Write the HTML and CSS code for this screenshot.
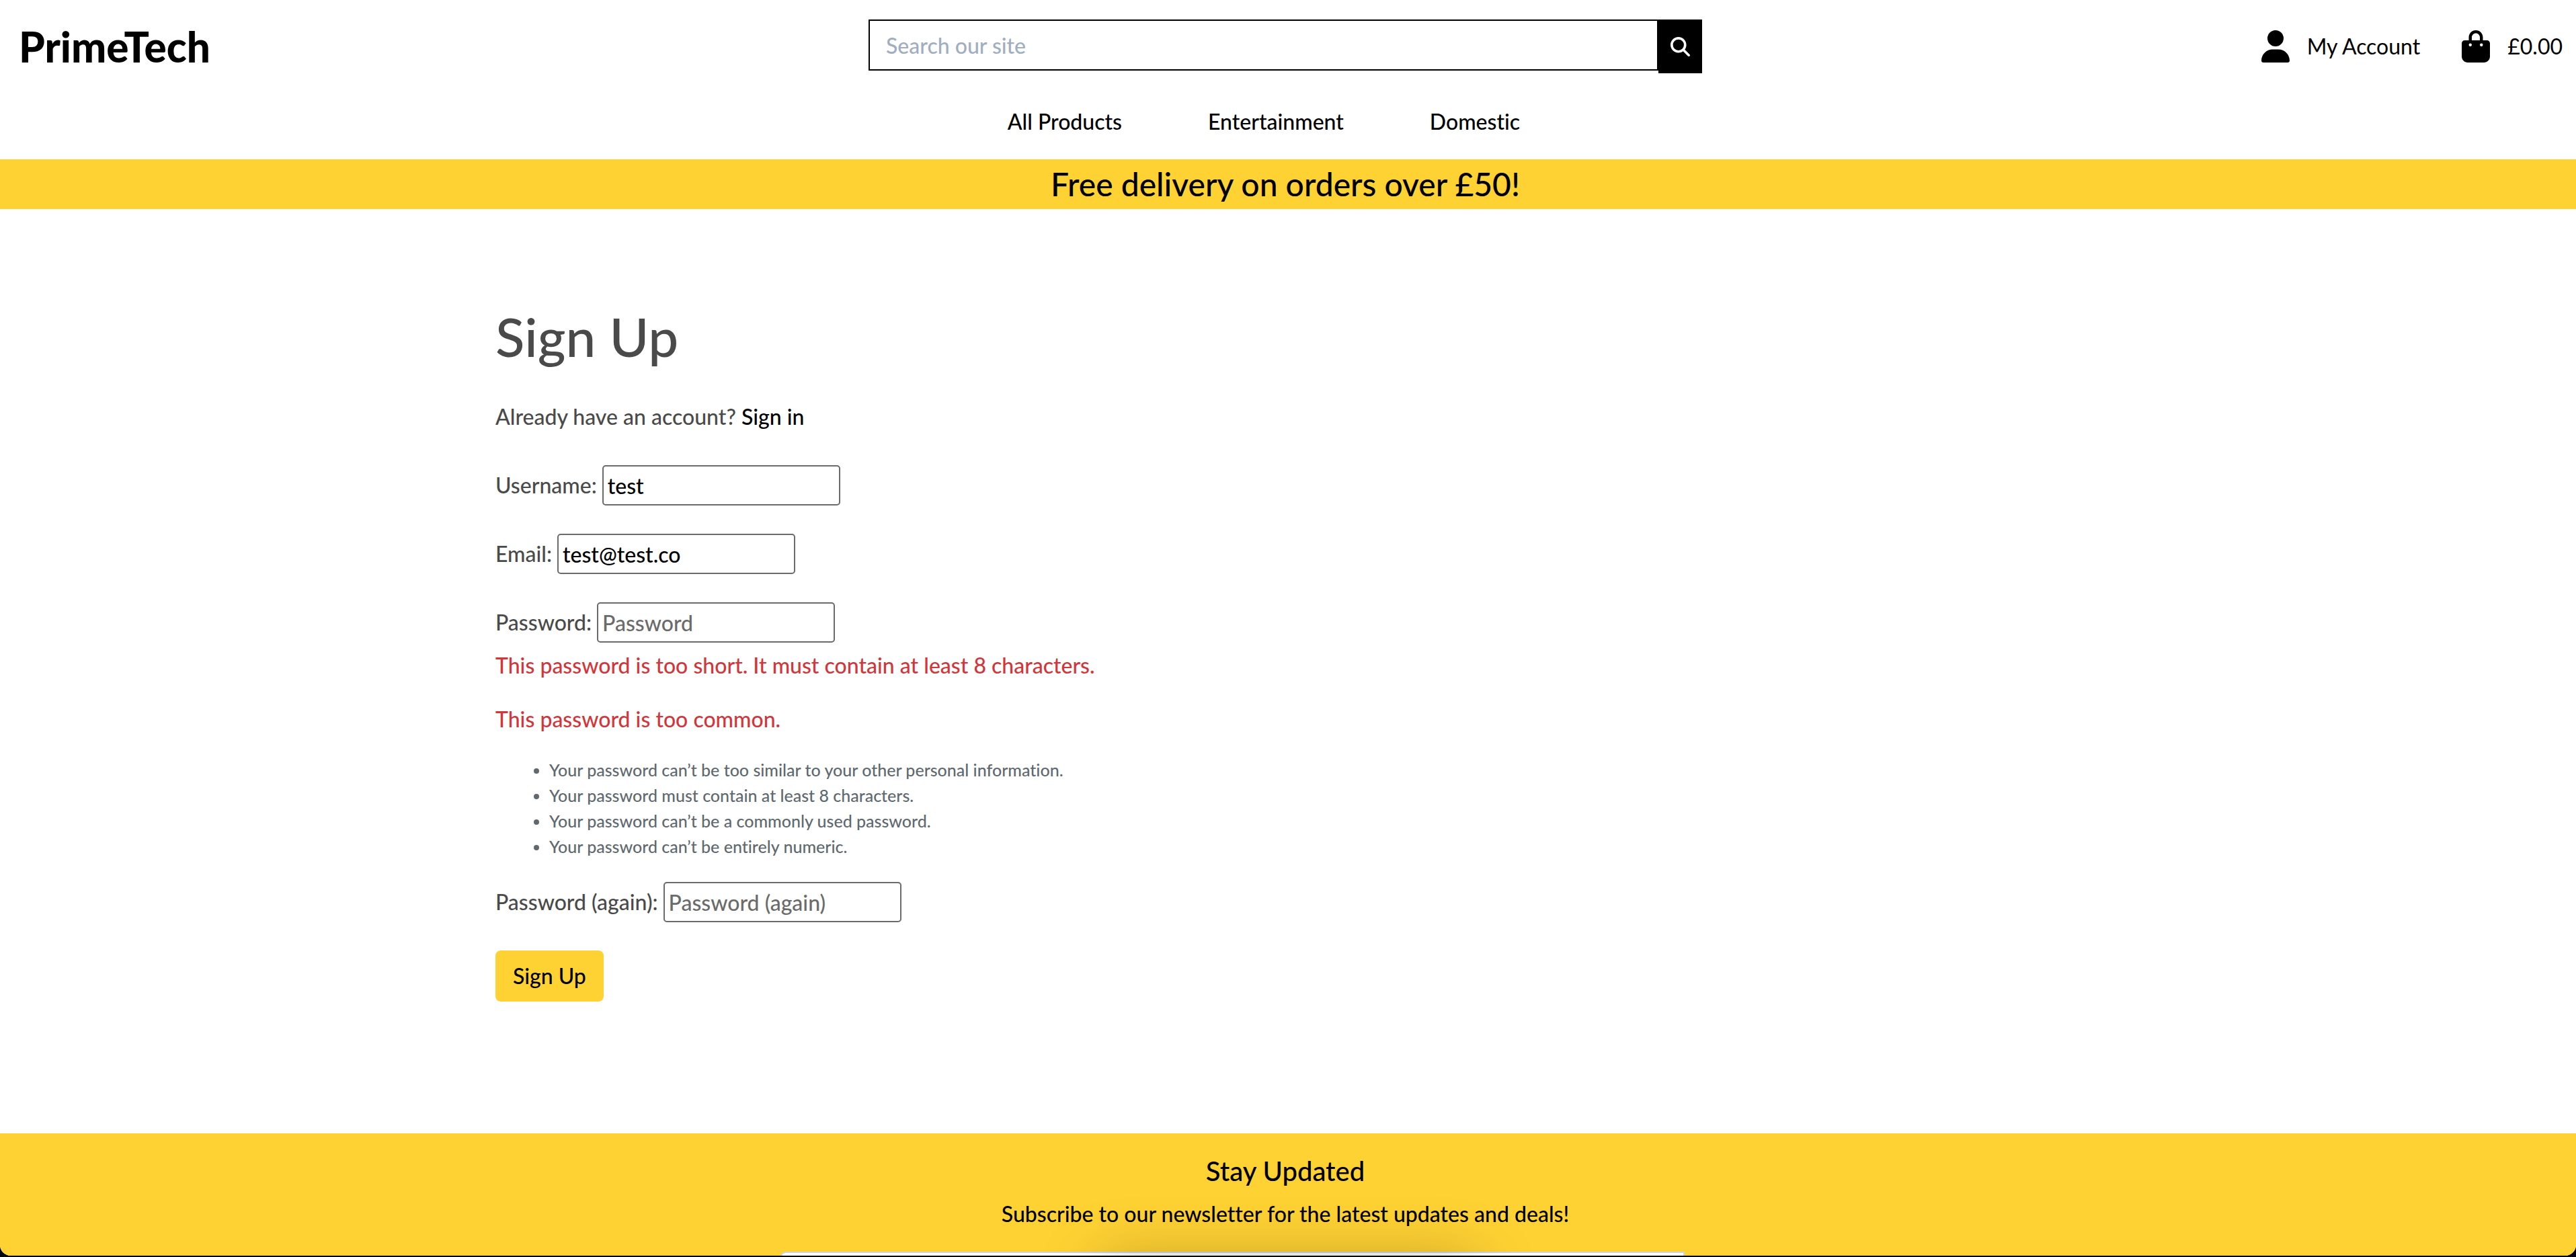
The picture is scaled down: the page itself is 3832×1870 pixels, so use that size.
FILE: index.html
```html
<!DOCTYPE html>
<html lang="en">
<head>
  <meta charset="utf-8">
  <meta name="viewport" content="width=device-width, initial-scale=1">
  <title>PrimeTech - Sign Up</title>
  <link rel="stylesheet" href="styles.css">
</head>
<body>
  <div class="page">
    <header class="header">
      <div class="header-row">
        <a class="logo" href="#">PrimeTech</a>
        <form class="search" role="search">
          <input class="search-input" type="search" placeholder="Search our site" aria-label="Search our site">
          <button class="search-button" type="submit" aria-label="Search">
            <svg class="search-icon" viewBox="0 0 512 512" aria-hidden="true"><path d="M416 208c0 45.900-14.900 88.300-40 122.700L502.600 457.400c12.500 12.500 12.500 32.800 0 45.300s-32.800 12.500-45.300 0L330.700 376c-34.400 25.200-76.800 40-122.700 40C93.100 416 0 322.900 0 208S93.100 0 208 0S416 93.100 416 208zM208 352a144 144 0 1 0 0-288 144 144 0 1 0 0 288z"/></svg>
          </button>
        </form>
        <div class="account">
          <a class="account-link" href="#">
            <svg class="account-icon" viewBox="0 0 448 512" aria-hidden="true"><path d="M224 256A128 128 0 1 0 224 0a128 128 0 1 0 0 256zm-45.700 48C79.800 304 0 383.800 0 482.300C0 498.700 13.300 512 29.700 512H418.300c16.400 0 29.700-13.300 29.700-29.700C448 383.800 368.200 304 269.700 304H178.300z"/></svg>
            <span>My Account</span>
          </a>
          <a class="account-link" href="#">
            <svg class="account-icon" viewBox="0 0 448 512" aria-hidden="true"><path d="M160 112c0-35.300 28.700-64 64-64s64 28.700 64 64v48H160V112zm-48 48H48c-26.500 0-48 21.500-48 48V416c0 53 43 96 96 96H352c53 0 96-43 96-96V208c0-26.500-21.500-48-48-48H336V112C336 50.100 285.900 0 224 0S112 50.100 112 112v48zm24 48a24 24 0 1 1 0 48 24 24 0 1 1 0-48zm152 24a24 24 0 1 1 48 0 24 24 0 1 1 -48 0z"/></svg>
            <span>£0.00</span>
          </a>
        </div>
      </div>
      <nav class="nav">
        <a href="#">All Products</a>
        <a href="#">Entertainment</a>
        <a href="#">Domestic</a>
      </nav>
    </header>

    <div class="banner">Free delivery on orders over £50!</div>

    <main class="main">
      <h1 class="title">Sign Up</h1>
      <p class="intro">Already have an account? <a href="#">Sign in</a></p>
      <form class="signup">
        <div class="field">
          <label for="username">Username:</label>
          <input id="username" type="text" value="test">
        </div>
        <div class="field">
          <label for="email">Email:</label>
          <input id="email" type="email" value="test@test.co">
        </div>
        <div class="field field-invalid">
          <label for="password1">Password:</label>
          <input id="password1" type="password" placeholder="Password">
        </div>
        <p class="error">This password is too short. It must contain at least 8 characters.</p>
        <p class="error">This password is too common.</p>
        <ul class="hints">
          <li>Your password can’t be too similar to your other personal information.</li>
          <li>Your password must contain at least 8 characters.</li>
          <li>Your password can’t be a commonly used password.</li>
          <li>Your password can’t be entirely numeric.</li>
        </ul>
        <div class="field">
          <label for="password2">Password (again):</label>
          <input id="password2" type="password" placeholder="Password (again)">
        </div>
        <button class="submit" type="submit">Sign Up</button>
      </form>
    </main>

    <footer class="footer">
      <h2 class="footer-title">Stay Updated</h2>
      <p class="footer-text">Subscribe to our newsletter for the latest updates and deals!</p>
      <form class="newsletter">
        <input class="newsletter-input" type="email" aria-label="Email address">
        <button class="newsletter-button" type="submit" aria-label="Subscribe"></button>
      </form>
      <div class="shade"></div>
    </footer>
  </div>
</body>
</html>
```
FILE: styles.css
```css
* {
  box-sizing: border-box;
}

body {
  margin: 0;
  background: #05050f;
  color: #000;
  font-family: Lato, "Open Sans", sans-serif;
  font-size: 32px;
  font-weight: 500;
  font-variant-ligatures: none;
  line-height: 48px;
}

h1, h2, p, ul {
  margin: 0;
  font-weight: 500;
}

a {
  color: #000;
  text-decoration: none;
}

input, button {
  font: inherit;
  color: #000;
}

.page {
  height: calc(100vh - 2px);
  overflow: hidden;
  border-radius: 0 0 16px 16px;
  background: #fff;
}

/* Header */

.header {
  padding: 29px 20px 32px 12px;
}

.header-row {
  display: grid;
  grid-template-columns: 1fr minmax(0, 1240px) 1fr;
  align-items: center;
}

.logo {
  padding-left: 16px;
  font-size: 62px;
  font-weight: 900;
  line-height: 80px;
}

.search {
  display: flex;
  align-items: flex-start;
}

.search-input {
  flex: 1;
  min-width: 0;
  height: 76px;
  padding: 0 24px;
  border: 2px solid #000;
  border-radius: 0;
  background: #fff;
  appearance: none;
}

.search-input::placeholder {
  color: #a0aec0;
  opacity: 1;
}

.search-button {
  display: flex;
  align-items: center;
  justify-content: center;
  width: 65px;
  height: 80px;
  padding: 0;
  border: 0;
  background: #000;
}

.search-icon {
  width: 29px;
  height: 29px;
  fill: #fff;
}

.account {
  display: flex;
  justify-content: flex-end;
  gap: 62px;
  font-weight: 400;
}

.account-link {
  display: flex;
  align-items: center;
  gap: 26px;
}

.account-icon {
  width: 42px;
  height: 48px;
}

.nav {
  display: flex;
  justify-content: center;
  gap: 128px;
  padding-top: 48px;
  padding-right: 64px;
}

.banner {
  padding-right: 8px;
  background: #ffd233;
  font-size: 48px;
  line-height: 74px;
  text-align: center;
}

/* Sign-up form */

.main {
  max-width: 2358px;
  margin: 0 auto;
  padding: 141px 0 196px;
  color: #4a4a4a;
}

.title {
  margin-bottom: 48px;
  font-size: 80px;
  line-height: 96px;
}

.intro {
  margin-bottom: 48px;
}

.field {
  display: flex;
  align-items: center;
  gap: 8px;
  margin-bottom: 42px;
}

.field input {
  width: 354px;
  height: 60px;
  padding: 0 6px;
  border: 2px solid #6b6b6b;
  border-radius: 5px;
  background: #fff;
}

.field input::placeholder {
  color: #6b6b6b;
  opacity: 1;
}

.field-invalid {
  margin-bottom: 10px;
}

.error {
  margin-bottom: 32px;
  color: #d1363b;
}

.hints {
  margin-bottom: 34px;
  padding-left: 80px;
  color: #606970;
  font-size: 25px;
  line-height: 38px;
}

.submit {
  display: block;
  height: 76px;
  padding: 0 26px;
  border: 0;
  border-radius: 8px;
  background: #ffd233;
}

/* Newsletter */

.footer {
  position: relative;
  padding: 32px 8px 64px 0;
  background: #ffd233;
  text-align: center;
}

.footer-title {
  margin-bottom: 16px;
  font-size: 40px;
}

.footer-text {
  margin-bottom: 32px;
}

.newsletter {
  display: flex;
  justify-content: center;
}

.newsletter-input {
  width: 1345px;
  height: 76px;
  padding: 0 24px;
  border: 2px solid #ced4da;
  border-radius: 8px 0 0 8px;
  background: #fff;
}

.newsletter-button {
  width: 157px;
  border: 0;
  background: #ffd233;
}

/* Soft shadow that rises over the bottom edge of the page */
.shade {
  position: absolute;
  top: 198px;
  left: 50%;
  width: 540px;
  height: 60px;
  margin-left: -270px;
  box-shadow: 0 0 90px 10px rgba(0, 0, 0, 0.25);
  pointer-events: none;
}
```
